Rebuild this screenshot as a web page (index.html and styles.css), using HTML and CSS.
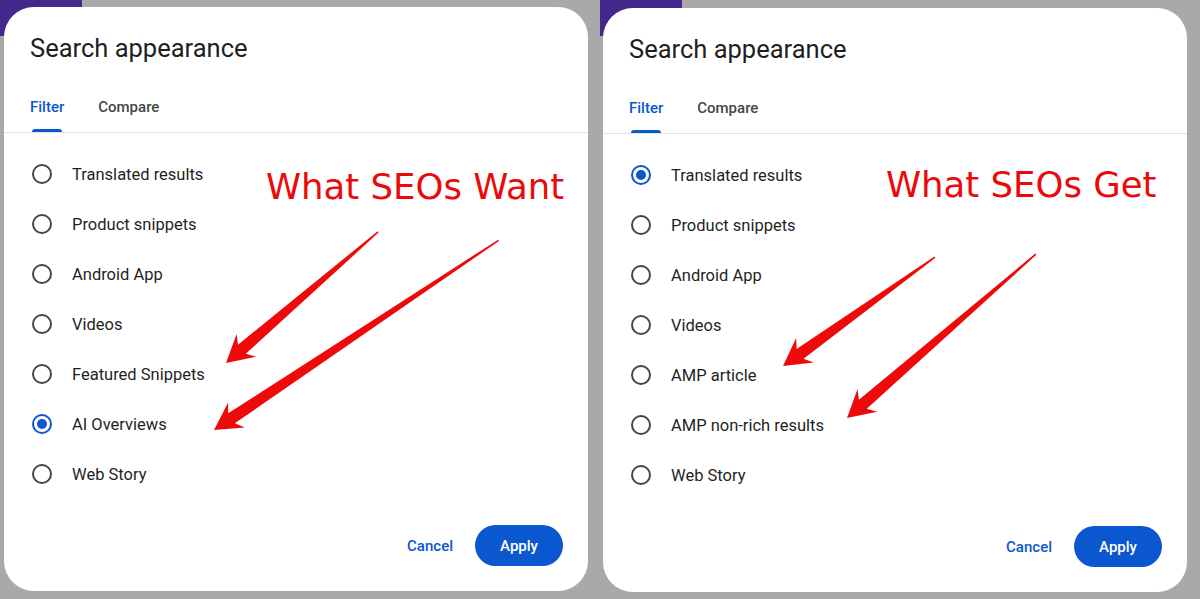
FILE: index.html
```html
<!DOCTYPE html>
<html lang="en">
<head>
    <meta charset="UTF-8">
    <meta name="viewport" content="width=device-width, initial-scale=1.0">
    <title>Search appearance - Want vs Get</title>
    <link rel="stylesheet" href="styles.css">
</head>
<body>
    <div class="stage">

        <!-- left: what we'd like to see -->
        <section class="dialog">
            <h2 class="dialog-title">Search appearance</h2>
            <div class="tabs">
                <span class="tab active">Filter</span>
                <span class="tab">Compare</span>
            </div>
            <ul class="options">
                <li class="option"><span class="radio"></span>Translated results</li>
                <li class="option"><span class="radio"></span>Product snippets</li>
                <li class="option"><span class="radio"></span>Android App</li>
                <li class="option"><span class="radio"></span>Videos</li>
                <li class="option"><span class="radio"></span>Featured Snippets</li>
                <li class="option"><span class="radio checked"></span>AI Overviews</li>
                <li class="option"><span class="radio"></span>Web Story</li>
            </ul>
            <div class="actions">
                <button class="btn-text">Cancel</button>
                <button class="btn-filled">Apply</button>
            </div>

            <div class="note note-want">What SEOs Want</div>
            <svg class="arrows" viewBox="0 0 584 584">
                <polygon transform="translate(222 356) rotate(-40.76)" points="0,0 27,-15 21,-6 201,-0.8 201,0.8 21,6 27,15" />
                <polygon transform="translate(210 423) rotate(-33.69)" points="0,0 27,-15 21,-6 342,-0.8 342,0.8 21,6 27,15" />
            </svg>
        </section>

        <!-- right: what the console actually offers -->
        <section class="dialog dialog-right">
            <h2 class="dialog-title">Search appearance</h2>
            <div class="tabs">
                <span class="tab active">Filter</span>
                <span class="tab">Compare</span>
            </div>
            <ul class="options">
                <li class="option"><span class="radio checked"></span>Translated results</li>
                <li class="option"><span class="radio"></span>Product snippets</li>
                <li class="option"><span class="radio"></span>Android App</li>
                <li class="option"><span class="radio"></span>Videos</li>
                <li class="option"><span class="radio"></span>AMP article</li>
                <li class="option"><span class="radio"></span>AMP non-rich results</li>
                <li class="option"><span class="radio"></span>Web Story</li>
            </ul>
            <div class="actions">
                <button class="btn-text">Cancel</button>
                <button class="btn-filled">Apply</button>
            </div>

            <div class="note note-get">What SEOs Get</div>
            <svg class="arrows" viewBox="0 0 584 584">
                <polygon transform="translate(180 358) rotate(-35.64)" points="0,0 27,-15 21,-6 187,-0.8 187,0.8 21,6 27,15" />
                <polygon transform="translate(244 410) rotate(-40.95)" points="0,0 27,-15 21,-6 250,-0.8 250,0.8 21,6 27,15" />
            </svg>
        </section>

    </div>
</body>
</html>
```

FILE: styles.css
```css
body {
    margin: 0;
    overflow: hidden;
    font-family: Roboto, "Liberation Sans", sans-serif;
    color: #1f1f1f;
    background:
        linear-gradient(#45288c, #45288c) 0 0 / 82px 36px no-repeat,
        linear-gradient(#45288c, #45288c) 600px 0 / 82px 36px no-repeat,
        #a9a9a9;
}

.stage {
    display: flex;
    gap: 15px;
    padding: 7px 0 0 4px;
}

.dialog {
    position: relative;
    width: 584px;
    height: 584px;
    display: flex;
    flex-direction: column;
    background-color: #fff;
    border-radius: 30px;
}

.dialog-right {
    margin-top: 1px;
}

.dialog-title {
    margin: 0;
    padding: 25px 26px 0;
    font-size: 25.5px;
    font-weight: 400;
    line-height: 32px;
    color: #1f1f1f;
}

.tabs {
    display: flex;
    gap: 34px;
    padding: 0 26px;
    border-bottom: 1px solid #e3e3e3;
}

.tab {
    position: relative;
    padding: 33px 0 15px;
    font-size: 15px;
    font-weight: 500;
    line-height: 20px;
    color: #444746;
}

.tab.active {
    color: #0b57d0;
}

.tab.active::after {
    content: "";
    position: absolute;
    left: 2px;
    right: 2px;
    bottom: 0;
    height: 3px;
    border-radius: 3px 3px 0 0;
    background-color: #0b57d0;
}

.options {
    list-style: none;
    margin: 0;
    padding: 16px 0 0 28px;
}

.option {
    display: flex;
    align-items: center;
    gap: 20px;
    height: 50px;
    font-size: 16.5px;
    color: #1f1f1f;
}

.radio {
    box-sizing: border-box;
    width: 20px;
    height: 20px;
    border: 2px solid #444746;
    border-radius: 50%;
    display: flex;
    align-items: center;
    justify-content: center;
}

.radio.checked {
    border-color: #0b57d0;
}

.radio.checked::after {
    content: "";
    width: 10px;
    height: 10px;
    border-radius: 50%;
    background-color: #0b57d0;
}

.actions {
    margin-top: auto;
    display: flex;
    justify-content: flex-end;
    align-items: center;
    gap: 22px;
    padding: 0 25px 25px;
}

.actions button {
    font-family: inherit;
    font-size: 15px;
    font-weight: 500;
    border: none;
    cursor: pointer;
}

.btn-text {
    padding: 0;
    background: transparent;
    color: #0b57d0;
}

.btn-filled {
    width: 88px;
    height: 41px;
    border-radius: 21px;
    background-color: #0b57d0;
    color: #fff;
}

/* red annotations drawn over the dialogs */
.note {
    position: absolute;
    font-family: "DejaVu Sans", sans-serif;
    font-size: 35.5px;
    line-height: 35.5px;
    color: #ea0a0a;
    white-space: nowrap;
}

.note-want {
    left: 262px;
    top: 162px;
}

.note-get {
    left: 283px;
    top: 159px;
}

.arrows {
    position: absolute;
    top: 0;
    left: 0;
    width: 584px;
    height: 584px;
    pointer-events: none;
    fill: #ee0a0a;
}
```
